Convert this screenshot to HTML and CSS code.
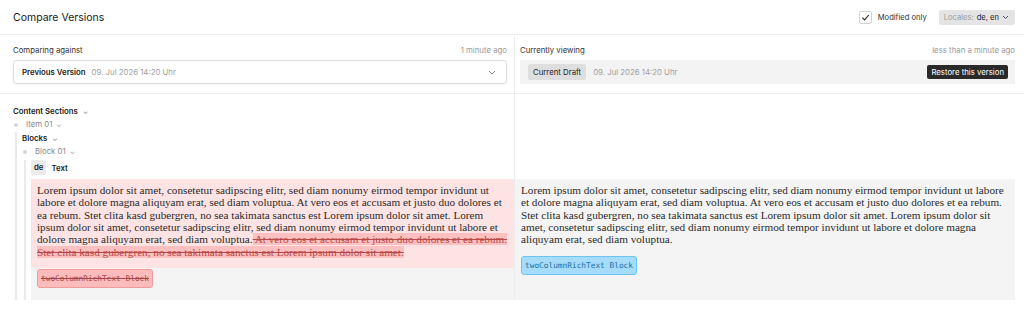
FILE: index.html
```html
<!DOCTYPE html>
<html lang="en">
<head>
  <meta charset="UTF-8">
  <meta name="viewport" content="width=device-width, initial-scale=1.0">
  <title>Compare Versions</title>
  <link rel="stylesheet" href="styles.css">
</head>
<body>
  <div class="header">
    <div class="title">Compare Versions</div>
    <div class="header-tools">
      <label class="check">
        <span class="box">
          <svg width="9" height="9" viewBox="0 0 10 10"><path d="M1.5 5.2 L4 7.6 L8.6 2.2" fill="none" stroke="#222" stroke-width="1.2"/></svg>
        </span>
        Modified only
      </label>
      <button class="locales"><span class="muted">Locales:</span> de, en
        <svg width="7" height="5" viewBox="0 0 7 5"><path d="M1 1 L3.5 3.5 L6 1" fill="none" stroke="#555" stroke-width="1"/></svg>
      </button>
    </div>
  </div>

  <div class="versions">
    <div class="col left">
      <div class="col-head">
        <span>Comparing against</span>
        <span class="ago">1 minute ago</span>
      </div>
      <div class="select">
        <b>Previous Version</b>
        <span class="date">09. Jul 2026 14:20 Uhr</span>
        <svg class="select-chev" width="8" height="5" viewBox="0 0 8 5"><path d="M1 1 L4 4 L7 1" fill="none" stroke="#777" stroke-width="0.9"/></svg>
      </div>
    </div>
    <div class="col right">
      <div class="col-head">
        <span>Currently viewing</span>
        <span class="ago">less than a minute ago</span>
      </div>
      <div class="current">
        <span class="pill">Current Draft</span>
        <span class="date">09. Jul 2026 14:20 Uhr</span>
        <button class="restore">Restore this version</button>
      </div>
    </div>
  </div>

  <div class="fields">
    <div class="col left tree">
      <div class="node">Content Sections <span class="small-chev">⌄</span></div>
      <div class="item"><span class="dot"></span>Item 01 <span class="small-chev">⌄</span></div>
      <div class="guide">
        <div class="node">Blocks <span class="small-chev">⌄</span></div>
        <div class="item"><span class="dot"></span>Block 01 <span class="small-chev">⌄</span></div>
        <div class="guide">
          <div class="field-name"><span class="lang">de</span>Text</div>
          <div class="diff diff-old">
            <div class="rich removed-block">
              Lorem ipsum dolor sit amet, consetetur sadipscing elitr, sed diam nonumy eirmod tempor invidunt ut labore et dolore magna aliquyam erat, sed diam voluptua. At vero eos et accusam et justo duo dolores et ea rebum. Stet clita kasd gubergren, no sea takimata sanctus est Lorem ipsum dolor sit amet. Lorem ipsum dolor sit amet, consetetur sadipscing elitr, sed diam nonumy eirmod tempor invidunt ut labore et dolore magna aliquyam erat, sed diam voluptua.<del> At vero eos et accusam et justo duo dolores et ea rebum. Stet clita kasd gubergren, no sea takimata sanctus est Lorem ipsum dolor sit amet.</del>
            </div>
            <span class="tag tag-removed">twoColumnRichText <small>Block</small></span>
          </div>
        </div>
      </div>
    </div>
    <div class="col right">
      <div class="diff diff-new">
        <div class="rich">
          Lorem ipsum dolor sit amet, consetetur sadipscing elitr, sed diam nonumy eirmod tempor invidunt ut labore et dolore magna aliquyam erat, sed diam voluptua. At vero eos et accusam et justo duo dolores et ea rebum. Stet clita kasd gubergren, no sea takimata sanctus est Lorem ipsum dolor sit amet. Lorem ipsum dolor sit amet, consetetur sadipscing elitr, sed diam nonumy eirmod tempor invidunt ut labore et dolore magna aliquyam erat, sed diam voluptua.
        </div>
        <span class="tag tag-added">twoColumnRichText <small>Block</small></span>
      </div>
    </div>
  </div>
</body>
</html>
```

FILE: styles.css
```css
body {
  font-family: Inter, "Noto Sans", sans-serif;
  font-size: 7.8px;
  color: #222;
  background: white;
  margin: 0;
  padding: 0;
}
.header {
  height: 34px;
  display: flex;
  align-items: center;
  justify-content: space-between;
  padding: 0 9px 0 13px;
  border-bottom: 1px solid #ececec;
}
.title {
  font-size: 10.5px;
  color: #1a1a1a;
}
.header-tools {
  display: flex;
  align-items: center;
  gap: 12px;
}
.check {
  display: flex;
  align-items: center;
  gap: 6px;
  font-size: 7.6px;
  color: #333;
}
.box {
  width: 11px;
  height: 11px;
  border: 1px solid #d4d4d4;
  border-radius: 2px;
  display: flex;
  align-items: center;
  justify-content: center;
}
.locales {
  font-family: inherit;
  font-size: 7.6px;
  background: #e4e4e4;
  color: #222;
  border: none;
  border-radius: 2px;
  height: 15px;
  padding: 0 6px 0 5px;
  display: flex;
  align-items: center;
  gap: 3px;
}
.muted {
  color: #9a9a9a;
}
.versions, .fields {
  display: grid;
  grid-template-columns: 515px 1fr;
}
.versions {
  border-bottom: 1px solid #ececec;
}
.col.left {
  border-right: 1px solid #ececec;
}
.versions .col {
  padding: 8px 7px 9px 13px;
}
.versions .col.right {
  padding: 8px 9px 9px 5px;
}
.col-head {
  display: flex;
  justify-content: space-between;
  line-height: 14px;
  color: #333;
  margin-bottom: 3px;
}
.ago {
  color: #999;
}
.select {
  height: 22px;
  border: 1px solid #dcdcdc;
  border-radius: 3px;
  box-shadow: 0 1px 1px rgba(0,0,0,0.04);
  display: flex;
  align-items: center;
  padding: 0 10px 0 8px;
  gap: 6px;
}
.select b {
  font-weight: 600;
  color: #222;
}
.date {
  color: #a0a0a0;
}
.select-chev {
  margin-left: auto;
}
.current {
  height: 24px;
  background: #f3f3f3;
  display: flex;
  align-items: center;
  padding: 0 7px 0 8px;
  gap: 7px;
}
.pill {
  background: #dedede;
  border-radius: 2px;
  padding: 3px 5px;
  color: #222;
}
.restore {
  margin-left: auto;
  font-family: inherit;
  font-size: 7.8px;
  background: #2a2a2a;
  color: white;
  border: none;
  border-radius: 2px;
  height: 14px;
  padding: 0 4px;
  line-height: 14px;
}
.tree {
  padding-top: 11px;
  padding-left: 13px;
}
.node {
  font-weight: 600;
  color: #222;
  line-height: 13.3px;
}
.item {
  color: #888;
  line-height: 13.3px;
  display: flex;
  align-items: center;
}
.dot {
  width: 4px;
  height: 4px;
  border-radius: 50%;
  background: #d8d8d8;
  margin: 0 8px 0 1px;
}
.small-chev {
  font-size: 7px;
  color: #999;
  margin-left: 3px;
}
.item .small-chev {
  margin-left: 4px;
}
.guide {
  border-left: 2px solid #eaeaea;
  margin-left: 2px;
  padding-left: 5px;
}
.field-name {
  font-weight: 600;
  display: flex;
  align-items: center;
  gap: 5px;
  height: 15px;
  margin: 2px 0 4px;
}
.lang {
  background: #ebebeb;
  border-radius: 2px;
  padding: 3px 3px;
  line-height: 9px;
}
.diff {
  height: 121px;
  background: #f4f4f4;
  box-sizing: border-box;
}
.fields .col.right {
  padding: 85px 9px 0 0;
}
.rich {
  font-family: "Liberation Serif", serif;
  font-size: 11.2px;
  line-height: 12.3px;
  color: #2a2a2a;
  padding: 5px 5px 10px 6px;
}
.removed-block {
  background: #fde3e3;
}
del {
  background: #fcc0c0;
  color: #b94a4a;
}
.diff-new .rich {
  padding: 5px 4px 11px 6px;
}
.tag {
  display: inline-block;
  margin-left: 6px;
  font-family: "DejaVu Sans Mono", monospace;
  font-size: 7.8px;
  line-height: 17px;
  padding: 0 3px;
  border-radius: 3px;
}
.tag small {
  font-size: 7.8px;
}
.tag-removed {
  background: #fdbcbc;
  border: 1px solid #f29b9b;
  color: #a44;
  text-decoration: line-through;
  margin-top: 1px;
}
.tag-added {
  background: #a6dcfb;
  border: 1px solid #6fc3f2;
  color: #1d6e9e;
}
```
